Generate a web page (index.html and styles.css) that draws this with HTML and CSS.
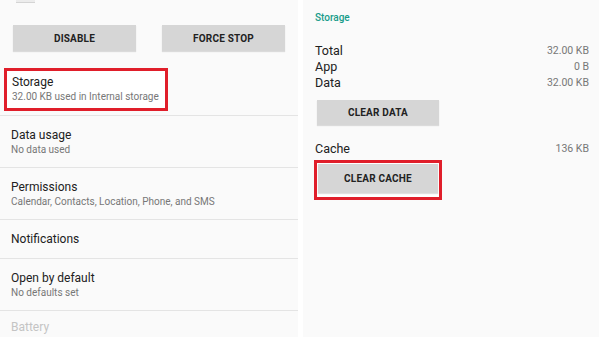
FILE: index.html
```html
<!DOCTYPE html>
<html lang="en">
<head>
  <meta charset="UTF-8" />
  <meta name="viewport" content="width=device-width, initial-scale=1.0"/>
  <title>App info</title>
  <link rel="stylesheet" href="styles.css">
</head>
<body>
  <div class="screen">
    <div class="panel panel-left">
      <div class="app-head">
        <div class="app-icon"></div>
        <div class="app-version">Version 1.0.1</div>
      </div>

      <div class="actions">
        <button class="btn btn-wide">DISABLE</button>
        <button class="btn btn-wide">FORCE STOP</button>
      </div>

      <div class="list">
        <div class="row">
          <div class="highlight">
            <div class="row-title">Storage</div>
            <div class="row-sub">32.00 KB used in Internal storage</div>
          </div>
        </div>
        <div class="row">
          <div class="row-title">Data usage</div>
          <div class="row-sub">No data used</div>
        </div>
        <div class="row">
          <div class="row-title">Permissions</div>
          <div class="row-sub">Calendar, Contacts, Location, Phone, and SMS</div>
        </div>
        <div class="row row-single">
          <div class="row-title">Notifications</div>
        </div>
        <div class="row">
          <div class="row-title">Open by default</div>
          <div class="row-sub">No defaults set</div>
        </div>
        <div class="row row-disabled">
          <div class="row-title">Battery</div>
        </div>
      </div>
    </div>

    <div class="panel panel-right">
      <div class="section-title">Storage</div>

      <div class="stats">
        <div class="stat"><span>Total</span><span class="stat-value">32.00 KB</span></div>
        <div class="stat"><span>App</span><span class="stat-value">0 B</span></div>
        <div class="stat"><span>Data</span><span class="stat-value">32.00 KB</span></div>
      </div>
      <button class="btn btn-clear">CLEAR DATA</button>

      <div class="stats stats-cache">
        <div class="stat"><span>Cache</span><span class="stat-value">136 KB</span></div>
      </div>
      <div class="highlight highlight-btn">
        <button class="btn btn-cache">CLEAR CACHE</button>
      </div>
    </div>
  </div>
</body>
</html>
```

FILE: styles.css
```css
html, body {
  height: 100%;
}

body {
  margin: 0;
  background-color: #fff;
  font-family: Roboto, "Noto Sans", Arial, sans-serif;
  color: #212121;
  overflow: hidden;
}

.screen {
  display: flex;
  gap: 5px;
  height: 337px;
  padding-right: 1px;
}

.panel {
  background-color: #fafafa;
  height: 100%;
  overflow: hidden;
}

.panel-left {
  width: 298px;
}

.panel-right {
  flex: 1;
  padding: 0 10px 0 12px;
}

.app-head {
  display: flex;
  gap: 17px;
  padding-left: 16px;
  height: 25px;
}

.app-icon {
  width: 19px;
  height: 10px;
  margin-top: -8px;
  background-color: #ececec;
  border-bottom: 1px solid #d4d4d4;
}

.app-version {
  margin-top: -9px;
  font-size: 10px;
  line-height: 12px;
  color: #9e9e9e;
}

.actions {
  display: flex;
  gap: 26px;
  padding-left: 13px;
  margin-bottom: 13px;
}

.btn {
  border: none;
  background-color: #d6d6d6;
  color: #222;
  font-family: Roboto, Arial, sans-serif;
  font-weight: 700;
  font-size: 10px;
  letter-spacing: 0.2px;
  padding: 0;
  box-shadow: 0 1px 1px rgba(0, 0, 0, 0.12);
}

.btn-wide {
  width: 123px;
  height: 26px;
}

.row {
  height: 51px;
  border-bottom: 1px solid #e4e4e4;
  display: flex;
  flex-direction: column;
  justify-content: center;
  padding-left: 11px;
}

.row-single {
  height: 38px;
}

.row-title {
  font-size: 12px;
  line-height: 15px;
}

.row-sub {
  font-size: 10px;
  line-height: 13px;
  color: #777;
}

.row-disabled {
  border-bottom: none;
  justify-content: flex-start;
  padding-top: 9px;
}

.row-disabled .row-title {
  color: #c4c4c4;
}

.highlight {
  border: 3px solid #e01e2a;
  background-color: #fff;
}

.row .highlight {
  width: 164px;
  box-sizing: border-box;
  margin-left: -7px;
  padding: 4px 5px 5px;
}

.section-title {
  margin-top: 12px;
  font-size: 10px;
  line-height: 12px;
  font-weight: 500;
  color: #179c8a;
}

.stats {
  margin-top: 19px;
}

.stat {
  display: flex;
  justify-content: space-between;
  font-size: 12.5px;
  line-height: 16px;
}

.stat-value {
  font-size: 10.5px;
  color: #777;
}

.btn-clear {
  width: 122px;
  height: 25px;
  margin: 9px 0 0 2px;
}

.stats-cache {
  margin-top: 16px;
}

.highlight-btn {
  width: fit-content;
  margin: 3px 0 0 -1px;
  padding: 1px 1px 4px;
}

.btn-cache {
  display: block;
  width: 120px;
  height: 29px;
}
```
